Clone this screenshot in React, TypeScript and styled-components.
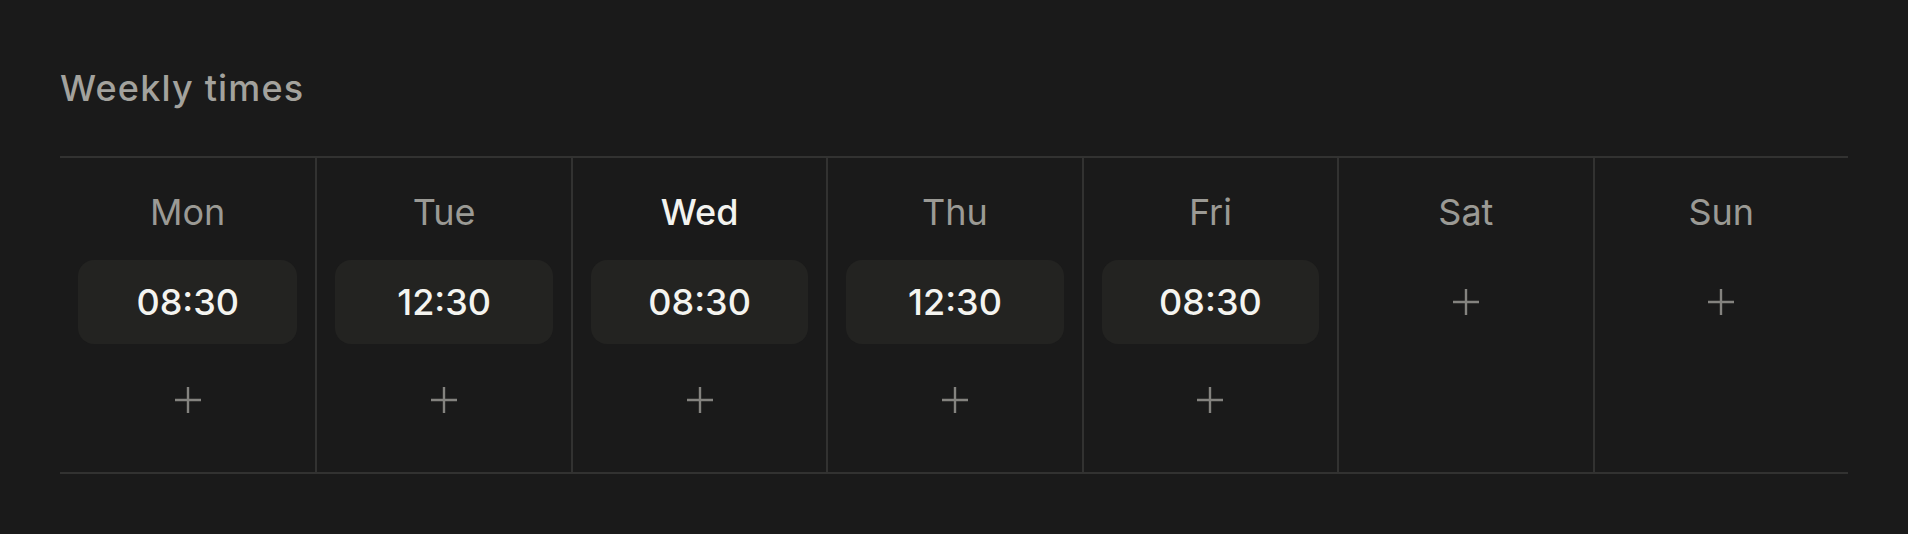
import styled, { createGlobalStyle } from 'styled-components'

const GlobalStyle = createGlobalStyle`
  html, body {
    margin: 0;
    padding: 0;
    background: #1a1a1a;
  }
  body {
    font-family: Inter, "Noto Sans", sans-serif;
  }
`;

const Page = styled.div`
  padding: 67px 60px 0;
`;

const Heading = styled.h2`
  margin: 0 0 46px;
  font-size: 36px;
  line-height: 1.2;
  font-weight: 500;
  letter-spacing: 0.033em;
  color: #a3a29d;
`;

const Week = styled.div`
  display: grid;
  grid-template-columns: repeat(7, 1fr);
  border-top: 2px solid #323231;
  border-bottom: 2px solid #323231;
`;

const Day = styled.div`
  display: flex;
  flex-direction: column;
  align-items: stretch;
  padding: 33px 18px 30px;
  & + & {
    border-left: 2px solid #323231;
  }
`;

const DayName = styled.div<{ $today?: boolean }>`
  text-align: center;
  font-size: 36px;
  line-height: 1.2;
  font-weight: ${p => (p.$today ? 500 : 400)};
  color: ${p => (p.$today ? '#f3f3ef' : '#9b9a95')};
  margin-bottom: 26px;
`;

const Slots = styled.div`
  display: flex;
  flex-direction: column;
  gap: 14px;
`;

const TimePill = styled.button`
  height: 84px;
  border: none;
  border-radius: 16px;
  background: #232321;
  color: #f4f4f0;
  font-family: inherit;
  font-size: 36px;
  font-weight: 500;
  display: flex;
  align-items: center;
  justify-content: center;
`;

const AddButton = styled.button`
  height: 84px;
  border: none;
  background: transparent;
  color: #84837f;
  display: flex;
  align-items: center;
  justify-content: center;
  padding: 0;
`;

const PlusIcon = () => (
  <svg width="28" height="28" viewBox="0 0 28 28" fill="none">
    <path d="M14 1v26M1 14h26" stroke="currentColor" strokeWidth="2.4" />
  </svg>
);

const week = [
  { name: 'Mon', times: ['08:30'] },
  { name: 'Tue', times: ['12:30'] },
  { name: 'Wed', times: ['08:30'], today: true },
  { name: 'Thu', times: ['12:30'] },
  { name: 'Fri', times: ['08:30'] },
  { name: 'Sat', times: [] as string[] },
  { name: 'Sun', times: [] as string[] },
];

export default function App() {
  return (
    <>
      <GlobalStyle />
      <Page>
        <Heading>Weekly times</Heading>
        <Week>
          {week.map(d => (
            <Day key={d.name}>
              <DayName $today={d.today}>{d.name}</DayName>
              <Slots>
                {d.times.map(t => (
                  <TimePill key={t}>{t}</TimePill>
                ))}
                <AddButton aria-label={`Add time on ${d.name}`}>
                  <PlusIcon />
                </AddButton>
              </Slots>
            </Day>
          ))}
        </Week>
      </Page>
    </>
  )
}
